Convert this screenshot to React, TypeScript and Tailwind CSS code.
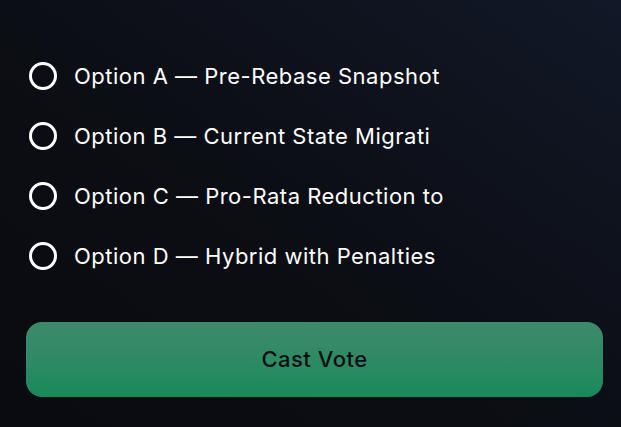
const options = [
  'Option A — Pre-Rebase Snapshot',
  'Option B — Current State Migrati',
  'Option C — Pro-Rata Reduction to',
  'Option D — Hybrid with Penalties',
]

export default function App() {
  return (
    <div
      className="w-[621px] h-[427px] overflow-hidden bg-gradient-to-tr from-[#0a0b10] via-[#0c0e15] to-[#111827] pl-[26px] pr-[18px] pt-[46px]"
      style={{ fontFamily: 'Inter, "Noto Sans", sans-serif' }}
    >
      <div className="flex flex-col">
        {options.map((o) => (
          <label key={o} className="flex items-center h-[60px] gap-[17px] pl-[3px] cursor-pointer">
            <span className="w-[28px] h-[28px] rounded-full border-[3px] border-white shrink-0" />
            <span className="text-white text-[22px] font-normal tracking-[0.5px] whitespace-nowrap">{o}</span>
          </label>
        ))}
      </div>
      <button className="mt-[36px] w-full h-[75px] rounded-[16px] bg-gradient-to-b from-[#3d8a6c] to-[#178a5a] text-[#0b0f14] text-[22px] font-medium tracking-[0.5px]">
        Cast Vote
      </button>
    </div>
  )
}
